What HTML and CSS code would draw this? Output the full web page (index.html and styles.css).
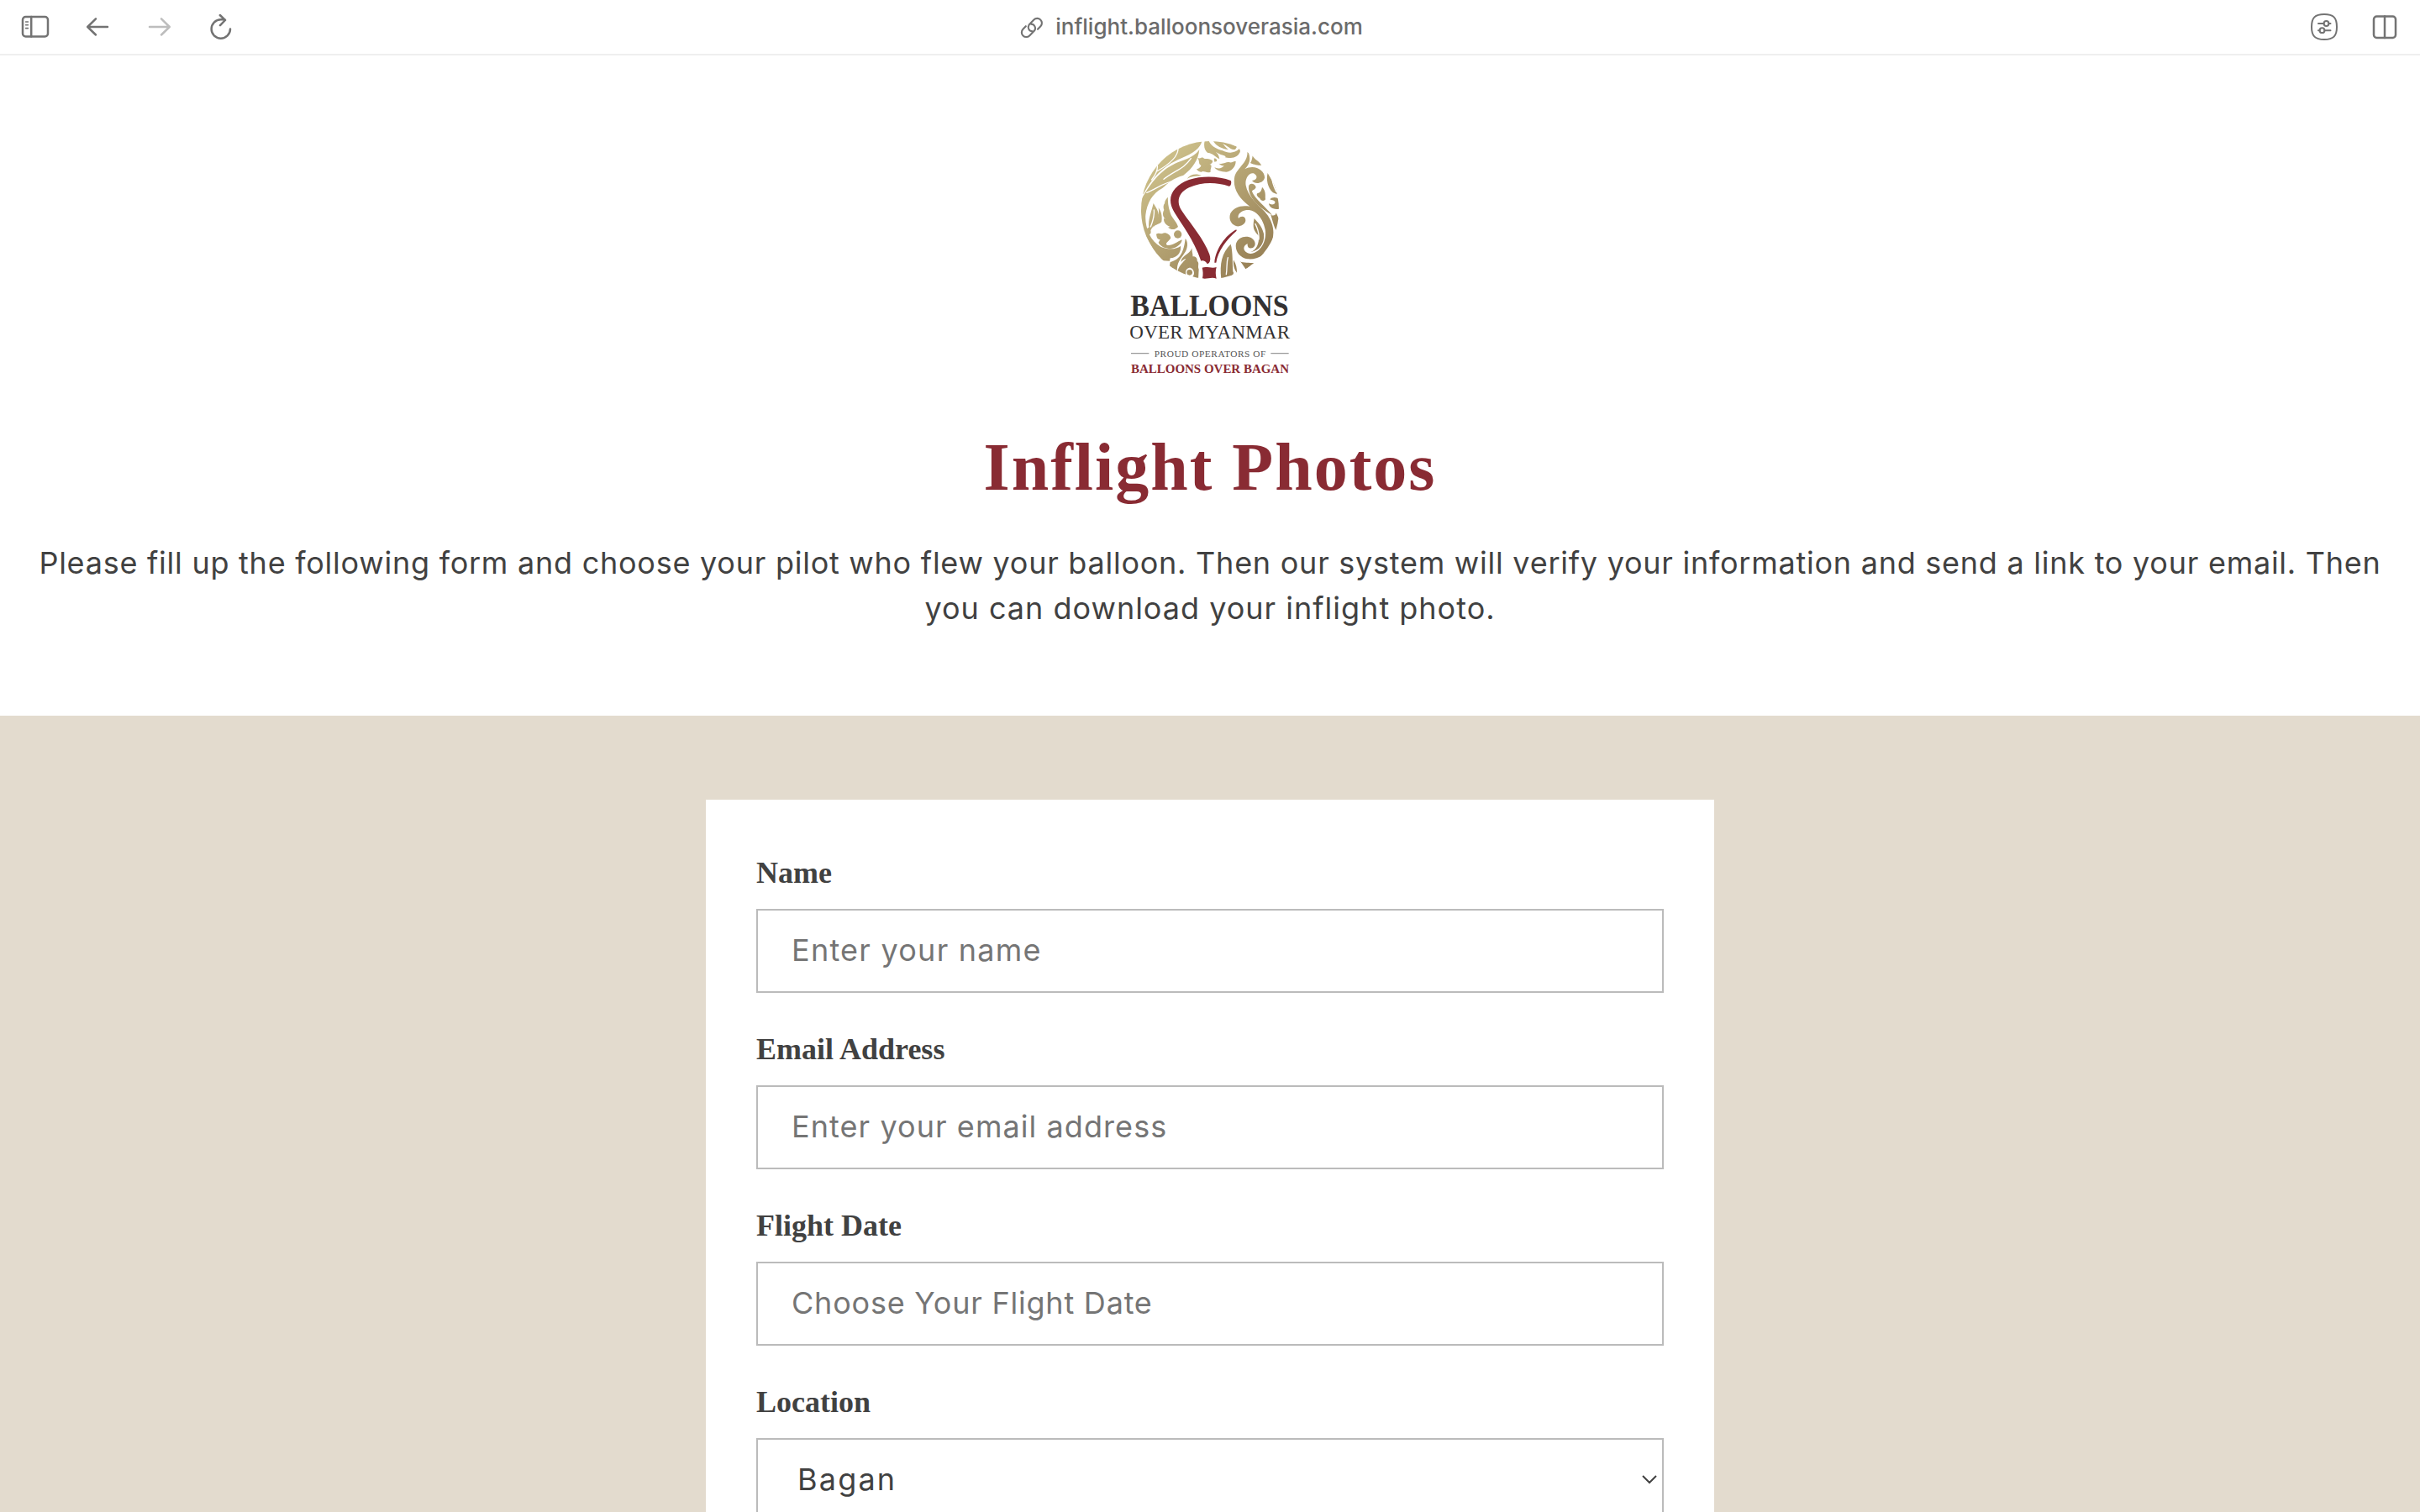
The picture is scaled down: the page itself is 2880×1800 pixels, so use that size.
FILE: index.html
```html
<!DOCTYPE html>
<html lang="en">
<head>
<meta charset="utf-8">
<title>Inflight Photos</title>
<link rel="stylesheet" href="styles.css">
</head>
<body>
<header class="toolbar">
  <div class="tools">
    <svg class="icon" width="34" height="28" viewBox="0 0 34 28"><rect x="2" y="2" width="30" height="23.5" rx="3.5"/><path d="M12.2 2v23.500"/><path class="thin" d="M5.600 8h2.800M5.600 11.800h2.800M5.600 15.600h2.800"/></svg>
    <svg class="icon back" width="28" height="24" viewBox="0 0 28 24"><path d="M26 12H2.200M12 2.300L2.200 12L12 21.500"/></svg>
    <svg class="icon off" width="28" height="24" viewBox="0 0 28 24"><path d="M2 12h23.800M16 2.300L25.800 12L16 21.500"/></svg>
    <svg class="icon" width="26" height="32" viewBox="0 0 26 32"><path d="M24 18.500A11.200 11.200 0 1 1 12.800 7.300H17.500M11.800 2L18 8L12 14.200"/></svg>
  </div>
  <div class="address">
    <svg class="icon link" width="28" height="28" viewBox="0 0 28 28"><path d="M14.500 18.400A5 5 0 0 1 10.600 10.600L16.400 4.600A5.300 5.300 0 0 1 24.400 12.200L21 15.800M13 9.600A5 5 0 0 1 17 17.600L11.200 23.400A5.300 5.300 0 0 1 3.400 15.800L6.800 12.200"/></svg>
    <span class="url">inflight.balloonsoverasia.com</span>
  </div>
  <div class="tools right">
    <svg class="icon" width="32" height="32" viewBox="0 0 32 32"><path class="mid" d="M16 1C27 1 31 5 31 16S27 31 16 31S1 27 1 16S5 1 16 1Z"/><path class="mid" d="M9 12h6.500M21.500 12h2M9 20.200h1.500M16.500 20.200h7"/><circle class="mid" cx="18.500" cy="12" r="2.900"/><circle class="mid" cx="13.500" cy="20.200" r="2.900"/></svg>
    <svg class="icon" width="30" height="30" viewBox="0 0 30 30"><rect x="2" y="2.500" width="26" height="25.500" rx="3.500"/><path d="M15 2.500v25.500"/></svg>
  </div>
</header>
<section class="intro">
  <svg class="logo" width="220" height="300" viewBox="0 0 660 900">
    <defs>
      <linearGradient id="gold" gradientUnits="userSpaceOnUse" x1="160" y1="100" x2="500" y2="500"><stop offset="0" stop-color="#cdc08a"/><stop offset="1" stop-color="#978056"/></linearGradient>
      <clipPath id="disc"><circle cx="330" cy="300" r="246"/></clipPath>
    </defs>
    <g clip-path="url(#disc)" fill="url(#gold)">
      <path d="M302 50C298 75 275 97 225 116C180 135 130 170 92 244L60 200L200 50Z"/>
      <path d="M292 84C288 120 270 150 235 176C195 188 180 205 160 222C125 240 105 275 100 318C97 360 115 410 155 432C185 445 215 438 225 428C228 450 215 470 188 472L186 482L150 480L70 340L84 264C130 182 170 146 225 126C260 114 280 102 292 84Z"/>
      <path d="M128 276C142 298 153 315 143 335C138 350 122 360 118 374C122 384 112 395 108 380C100 370 106 364 112 362C108 335 120 310 128 276Z"/>
      <path d="M146 292C156 305 160 320 157 342C150 352 140 348 126 362C136 342 152 325 146 292Z"/>
      <path d="M180 254C178 280 185 300 191 318C200 335 212 345 216 360C205 372 192 372 180 362L188 360C174 354 164 345 165 330L171 332C160 325 160 310 166 300C162 290 164 282 168 277C168 266 174 260 180 254Z"/>
      <path d="M138 386C146 380 154 386 160 384C170 378 188 386 190 400C184 412 166 420 178 426C196 428 212 414 230 406C230 420 212 436 190 438C170 438 152 430 146 416L152 406C140 404 140 396 138 386Z"/>
      <circle cx="215" cy="387" r="14"/>
      <path d="M242 402C254 415 250 440 238 455C225 475 210 488 213 522L184 508L188 486C218 478 235 460 242 402Z"/>
      <path d="M266 436C264 448 270 458 268 466C276 464 286 470 284 482C294 490 284 500 290 512L288 550L262 542C278 535 276 512 260 506C245 506 240 520 245 534L212 530C215 500 236 485 244 474C234 476 226 486 226 486C228 462 254 462 266 436Z"/>
      <circle cx="257" cy="523" r="10"/>
      <path d="M312 50C306 70 310 88 322 96C335 94 352 112 364 118C362 106 358 98 350 92C368 106 392 104 384 112C400 118 428 112 434 98C440 92 438 86 434 82C418 98 395 98 375 88C350 82 330 68 325 50Z"/>
      <path d="M340 50C348 70 372 82 396 84C384 76 382 68 374 62C396 72 404 86 420 84L426 74L380 50Z"/>
      <path d="M286 114C296 118 300 110 306 114C312 120 322 114 332 120C344 122 340 134 328 138C342 138 330 152 332 164C318 170 306 158 300 164C292 166 284 158 282 154C290 152 298 146 298 140C288 138 294 126 286 114Z"/>
      <path d="M346 148C358 154 374 152 380 142C370 142 366 138 362 134C380 138 388 126 400 130C410 132 414 124 422 126C422 144 408 162 388 164C370 164 352 158 346 148Z"/>
      <path d="M344 116C350 114 356 118 354 126L346 128ZM248 188C260 172 282 168 300 178C280 178 262 180 248 188Z"/>
      <path d="M463 88C480 115 470 140 454 154C490 134 527 160 525 185C520 205 490 210 480 195C498 194 502 178 488 170C468 164 454 190 458 212C465 250 500 280 525 305C555 340 562 375 552 410C535 460 500 478 465 475C435 470 418 445 423 420C430 400 450 392 470 397C490 402 498 425 484 434C472 440 462 434 464 420C442 430 450 454 475 456C510 454 534 410 527 370C520 335 500 305 470 300C445 298 425 315 432 330C440 318 458 322 457 337C457 350 440 360 425 358C403 352 396 330 403 312C415 290 440 282 472 287C430 255 410 220 418 180C430 145 468 130 463 88Z"/>
      <path d="M482 106C490 122 500 120 514 140C500 142 482 136 474 132C480 124 480 116 482 106Z"/>
      <path d="M536 168C530 190 535 220 555 238L575 246L570 222C560 210 548 190 536 168Z"/>
      <path d="M468 216C470 202 490 204 494 218C492 228 482 226 480 234C490 260 530 290 552 318C520 300 465 262 468 216Z"/>
      <path d="M516 218C532 235 526 250 528 262C522 272 508 264 508 258C498 252 494 244 500 240C510 238 514 230 516 218Z"/>
      <path d="M544 262C552 252 570 252 578 264L576 296C555 300 540 288 540 276C550 284 564 280 562 270C556 264 550 266 544 262Z"/>
      <path d="M566 310C564 322 550 322 546 314C552 332 558 360 566 372L580 340Z"/>
      <path d="M488 330C480 365 488 376 504 392C506 420 495 444 475 450C500 448 526 425 522 385C515 355 500 345 488 330Z"/>
      <path d="M404 422C372 452 364 492 370 546C405 542 420 530 412 520C410 500 412 445 404 422Z"/>
      <path d="M414 478C424 494 426 508 426 524C418 515 412 500 414 478ZM438 484C450 490 470 488 488 490L458 512C450 500 446 494 438 484Z"/>
    </g>
    <g class="vein">
      <path d="M216 78C218 108 190 134 140 162M142 142C144 158 134 176 122 192M262 116C235 155 205 158 165 190M204 196C165 200 140 225 104 238M552 176C548 195 558 215 566 234M394 470C388 490 392 505 388 530M130 300C132 320 126 340 118 360M492 350C502 370 506 385 504 405"/>
    </g>
    <path class="red" d="M404 195C365 180 305 176 255 192C205 210 180 245 192 285C205 325 265 385 298 482C306 478 315 484 320 492C330 492 334 475 328 458C305 395 240 325 223 292C210 262 223 235 255 220C300 200 350 200 398 215C405 216 408 200 404 195Z"/>
    <path class="red" d="M424 370C385 390 350 440 346 488H352C358 445 390 405 425 374Z"/>
    <path class="red" d="M302 506C318 500 336 510 353 504C349 518 350 532 353 545C336 538 318 548 303 544C306 530 305 518 302 506Z"/>
    <g class="brand">
      <text x="46" y="679" font-size="105" font-weight="700" textLength="565" lengthAdjust="spacingAndGlyphs">BALLOONS</text>
      <text x="43" y="758" font-size="69" textLength="572">OVER MYANMAR</text>
      <text class="small" x="131" y="824" font-size="34" textLength="398">PROUD OPERATORS OF</text>
      <text class="red" x="48" y="881" font-size="46" font-weight="700" textLength="564" lengthAdjust="spacingAndGlyphs">BALLOONS OVER BAGAN</text>
    </g>
    <path class="rule" d="M48 812H112M547 812H611"/>
  </svg>
  <h1 class="title">Inflight Photos</h1>
  <p class="lead">Please fill up the following form and choose your pilot who flew your balloon. Then our system will verify your information and send a link to your email. Then <span class="tail">you can download your inflight photo.</span></p>
</section>
<main class="form-area">
  <form class="card">
    <label class="field"><span class="label">Name</span><input class="control name" placeholder="Enter your name"></label>
    <label class="field"><span class="label">Email Address</span><input class="control email" placeholder="Enter your email address"></label>
    <label class="field"><span class="label">Flight Date</span><input class="control date" placeholder="Choose Your Flight Date"></label>
    <div class="field"><span class="label">Location</span><div class="control select"><span>Bagan</span><svg width="20" height="12" viewBox="0 0 20 12"><path d="M2 2L10 10L18 2"/></svg></div></div>
  </form>
</main>
</body>
</html>
```
FILE: styles.css
```css
* { box-sizing: border-box; }
body {
  margin: 0;
  height: 1800px;
  overflow: hidden;
  display: flex;
  flex-direction: column;
  background: #fff;
  color: #414141;
  font-family: Inter, "Open Sans", sans-serif;
}
.toolbar {
  height: 66px;
  flex: none;
  display: grid;
  grid-template-columns: 1fr auto 1fr;
  align-items: center;
  padding: 0 27px 0 25px;
  border-bottom: 2px solid #efefef;
}
.tools { display: flex; align-items: center; gap: 46px; }
.back { margin-left: -3px; }
.right { justify-content: flex-end; gap: 41px; }
.icon {
  fill: none;
  stroke: #737373;
  stroke-width: 2.5;
  stroke-linecap: round;
  stroke-linejoin: round;
}
.off { stroke: #bdbdbd; }
.thin { stroke-width: 1.6; }
.mid { stroke-width: 2; }
.link { stroke-width: 2.1; margin-top: 2px; }
.address { display: flex; align-items: center; gap: 14px; margin-right: 42px; }
.url { font-size: 26px; font-weight: 500; line-height: 32px; color: #6b6b6b; }
.intro {
  height: 786px;
  flex: none;
  display: flex;
  flex-direction: column;
  align-items: center;
  padding: 84px 40px 0;
}
.logo { flex: none; }
.vein { fill: none; stroke: #fff; stroke-width: 4; stroke-linecap: round; }
.red { fill: #892b33; }
.brand { font-family: "Liberation Serif", serif; fill: #333132; }
.brand .red { fill: #892b33; }
.brand .small { fill: #555; }
.rule { stroke: #999; stroke-width: 4; }
.title {
  margin: 58px 0 0;
  font: 700 80px/96px "Liberation Serif", serif;
  letter-spacing: 2px;
  color: #892b33;
}
.lead {
  margin: 39px 0 0;
  font-size: 36px;
  line-height: 54px;
  letter-spacing: 0.75px;
  text-align: center;
}
.tail { letter-spacing: 1px; }
.form-area {
  flex: 1;
  min-height: 0;
  overflow: hidden;
  display: flex;
  justify-content: center;
  padding-top: 100px;
  background: #e3dbce;
}
.card {
  width: 1200px;
  min-height: 0;
  overflow: hidden;
  padding: 60px 60px 0;
  display: flex;
  flex-direction: column;
  gap: 40px;
  background: #fff;
}
.field { display: flex; flex-direction: column; height: 170px; flex: none; }
.label { font: 700 36px/54px "Liberation Serif", serif; margin-bottom: 16px; }
.control {
  width: 100%;
  height: 100px;
  margin: 0;
  padding: 0 38px 2px 40px;
  border: 2px solid #bbb;
  border-radius: 0;
  background: #fff;
  font: 400 36px/54px Inter, "Open Sans", sans-serif;
  color: #414141;
}
.control::placeholder { color: #757575; opacity: 1; }
.name { letter-spacing: 1.25px; }
.email { letter-spacing: 1.07px; }
.date { letter-spacing: 0.78px; }
.select {
  display: flex;
  align-items: center;
  justify-content: space-between;
  padding: 0 5px 2px 47px;
  letter-spacing: 2.2px;
}
.select path { fill: none; stroke: #414141; stroke-width: 2; }
```
